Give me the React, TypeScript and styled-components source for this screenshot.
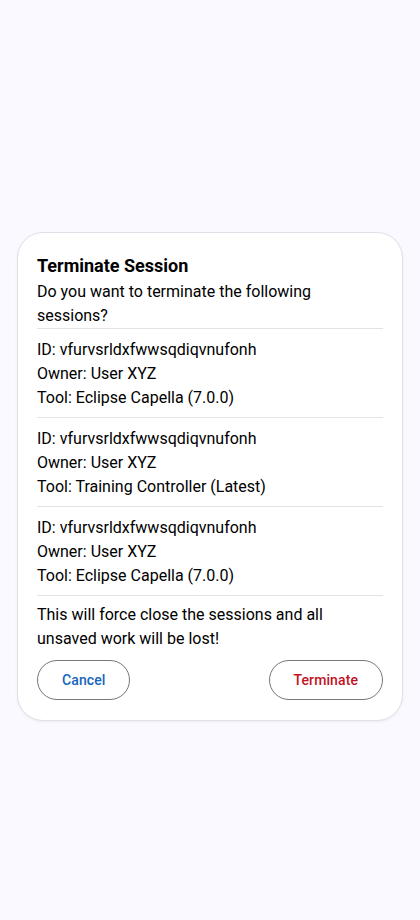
import styled, { createGlobalStyle } from "styled-components";

const GlobalStyle = createGlobalStyle`
  html, body {
    margin: 0;
    padding: 0;
    background: #f9f9ff;
    font-family: Roboto, "Noto Sans", sans-serif;
    color: #1b1b1f;
  }
`;

const Page = styled.div`
  min-height: 920px;
  padding: 232px 17px 0;
  box-sizing: border-box;
`;

const Dialog = styled.div`
  background: #ffffff;
  border: 1px solid #e0e0e8;
  border-radius: 26px;
  box-shadow: 0 1px 3px rgba(0, 0, 0, 0.06);
  padding: 22px 19px 20px;
  display: flex;
  flex-direction: column;
`;

const Title = styled.h2`
  margin: 0;
  font-size: 18px;
  font-weight: 700;
  line-height: 22px;
  color: #000;
`;

const Text = styled.p`
  margin: 3px 0 0;
  font-size: 16px;
  line-height: 24px;
  color: #000;
`;

const SessionList = styled.ul`
  list-style: none;
  margin: 0;
  padding: 0;
  border-top: 1px solid #e3e3e3;
`;

const Session = styled.li`
  padding: 9px 0 7px;
  border-bottom: 1px solid #e3e3e3;
  font-size: 16px;
  line-height: 24px;
  color: #000;
`;

const Warning = styled(Text)`
  margin-top: 7px;
`;

const Actions = styled.div`
  display: flex;
  justify-content: space-between;
  margin-top: 9px;
`;

const Button = styled.button<{ $tone: "primary" | "danger" }>`
  height: 40px;
  padding: 0 24px;
  border-radius: 20px;
  border: 1px solid #79747e;
  background: transparent;
  font-family: Roboto, sans-serif;
  font-size: 14px;
  font-weight: 500;
  letter-spacing: 0.1px;
  color: ${(p) => (p.$tone === "danger" ? "#c2121f" : "#1565c0")};
  cursor: pointer;
`;

const sessions = [
  { id: "vfurvsrldxfwwsqdiqvnufonh", owner: "User XYZ", tool: "Eclipse Capella (7.0.0)" },
  { id: "vfurvsrldxfwwsqdiqvnufonh", owner: "User XYZ", tool: "Training Controller (Latest)" },
  { id: "vfurvsrldxfwwsqdiqvnufonh", owner: "User XYZ", tool: "Eclipse Capella (7.0.0)" },
];

function App() {
  return (
    <>
      <GlobalStyle />
      <Page>
        <Dialog>
          <Title>Terminate Session</Title>
          <Text>Do you want to terminate the following sessions?</Text>
          <SessionList>
            {sessions.map((s, i) => (
              <Session key={i}>
                ID: {s.id}
                <br />
                Owner: {s.owner}
                <br />
                Tool: {s.tool}
              </Session>
            ))}
          </SessionList>
          <Warning>This will force close the sessions and all unsaved work will be lost!</Warning>
          <Actions>
            <Button $tone="primary">Cancel</Button>
            <Button $tone="danger">Terminate</Button>
          </Actions>
        </Dialog>
      </Page>
    </>
  );
}

export default App;
